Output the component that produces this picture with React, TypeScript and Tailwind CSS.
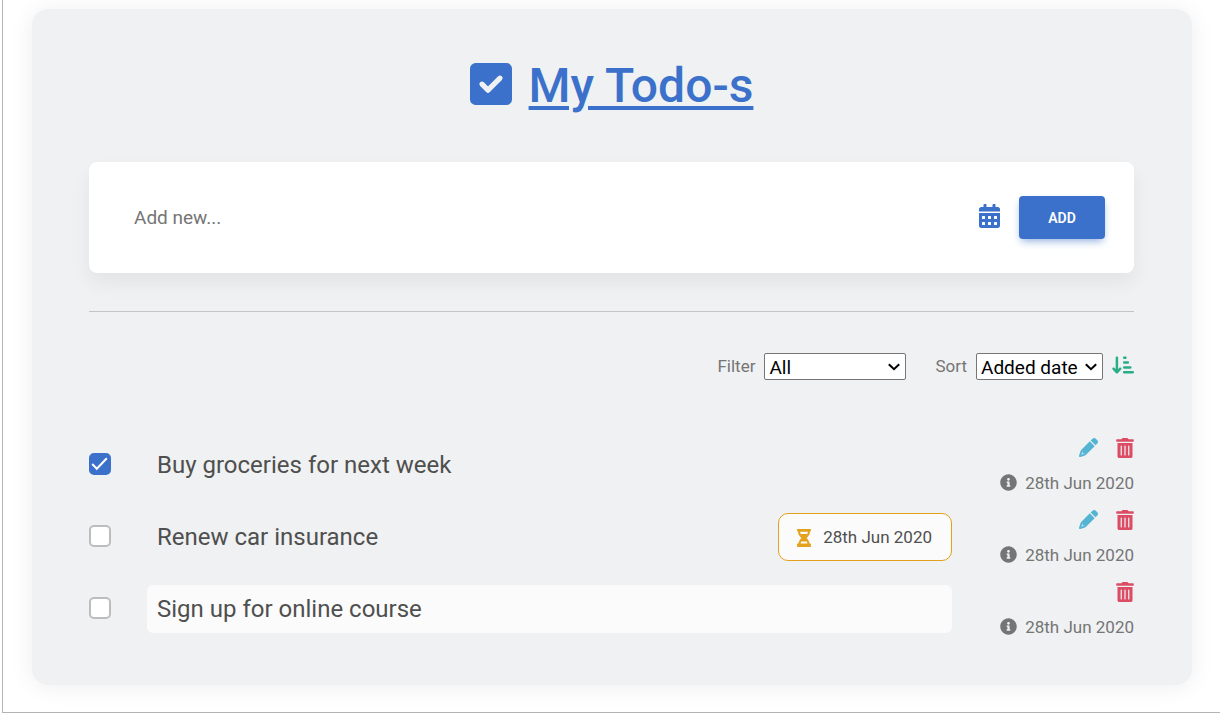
import { useState } from "react";
import { FaArrowDownShortWide } from "react-icons/fa6";
import { FaCalendarAlt, FaTrashAlt, FaInfoCircle } from "react-icons/fa";

type Todo = {
  id: number;
  title: string;
  done: boolean;
  due?: string;
  added: string;
  editing?: boolean;
};

const initialTodos: Todo[] = [
  { id: 1, title: "Buy groceries for next week", done: true, added: "28th Jun 2020" },
  { id: 2, title: "Renew car insurance", done: false, due: "28th Jun 2020", added: "28th Jun 2020" },
  { id: 3, title: "Sign up for online course", done: false, added: "28th Jun 2020", editing: true },
];

function SquareCheck() {
  return (
    <svg viewBox="0 0 448 448" className="mb-1 size-[42px]" aria-hidden="true">
      <rect width="448" height="448" rx="60" fill="currentColor" />
      <path
        d="M128 226 L192 290 L320 162"
        fill="none"
        stroke="#eff1f2"
        strokeWidth="56"
        strokeLinecap="round"
        strokeLinejoin="round"
      />
    </svg>
  );
}

function Pencil() {
  return (
    <svg viewBox="0 0 512 512" className="size-[19px]" fill="currentColor" aria-hidden="true">
      <path d="M421.7 220.3L188.5 453.4C178.1 463.8 165.2 471.5 151.1 475.6L30.8 511C22.4 513.5 13.2 511.2 7 505C.8 498.8-1.5 489.7 1 481.2L36.4 360.9C40.5 346.8 48.2 333.9 58.6 323.5L291.7 90.3L421.7 220.3zM492.7 58.8C517.7 83.7 517.7 124.3 492.7 149.3L444.3 197.7L314.3 67.7L362.7 19.3C387.7-5.7 428.3-5.7 453.3 19.3L492.7 58.8z" />
      <path d="M96 345 V400 Q96 416 112 416 H166 L138 430 L59 453 L82 374 Z" fill="#eff1f2" fillOpacity="0.7" />
    </svg>
  );
}

function Hourglass() {
  return (
    <svg viewBox="0 0 14 18" className="mr-3 h-[18px] w-[14px] text-[#e4a11b]" aria-hidden="true">
      <rect x="0" y="0" width="14" height="2.4" rx="1" fill="currentColor" />
      <path
        d="M2.2 1.5 V3.5 C2.2 6 4 7.4 5.8 9 C4 10.6 2.2 12 2.2 16.5 H11.8 C11.8 12 10 10.6 8.2 9 C10 7.4 11.8 6 11.8 3.5 V1.5 Z"
        fill="none"
        stroke="currentColor"
        strokeWidth="2"
      />
      <path d="M3.2 5 H10.8 L7.6 9 L10.2 10.8 L9.4 12.4 H4.6 L3.8 10.8 L6.4 9 Z" fill="currentColor" />
      <rect x="0" y="14.6" width="14" height="3.4" rx="1" fill="currentColor" />
    </svg>
  );
}

function Chevron() {
  return (
    <svg
      viewBox="0 0 12 8"
      className="pointer-events-none col-start-1 row-start-1 mr-[6px] h-2 w-3 justify-self-end"
      aria-hidden="true"
    >
      <path d="M0.8 1.2 L6 6.2 L11.2 1.2" fill="none" stroke="#000" strokeWidth="2" />
    </svg>
  );
}

function Checkbox({ checked, label, onChange }: { checked: boolean; label: string; onChange: () => void }) {
  return (
    <span className="mb-0.5 grid size-[22px] shrink-0">
      <input
        type="checkbox"
        aria-label={label}
        checked={checked}
        onChange={onChange}
        className="col-start-1 row-start-1 size-[22px] appearance-none rounded-[5px] border-2 border-[#bdbdbd] bg-white checked:border-[#3b71ca] checked:bg-[#3b71ca]"
      />
      {checked && (
        <svg viewBox="0 0 22 22" className="pointer-events-none col-start-1 row-start-1 size-[22px]" aria-hidden="true">
          <path d="M3.2 11 L7.8 15.7 L17.8 5.2" fill="none" stroke="#fff" strokeWidth="2" />
        </svg>
      )}
    </span>
  );
}

function TodoRow({ todo, onToggle }: { todo: Todo; onToggle: () => void }) {
  return (
    <li className="flex h-[72px] items-center">
      <Checkbox checked={todo.done} label={todo.title} onChange={onToggle} />
      <div className="ml-9 flex flex-1 items-center">
        {todo.editing ? (
          <input
            type="text"
            aria-label="Edit todo"
            defaultValue={todo.title}
            className="h-12 w-full rounded-md bg-[#fbfbfb] px-[10px] text-2xl text-[#4f4f4f] outline-none"
          />
        ) : (
          <p className="flex-1 px-[10px] text-2xl text-[#4f4f4f]">{todo.title}</p>
        )}
        {todo.due && (
          <div className="flex h-12 items-center rounded-[10px] border border-[#e4a11b] bg-[#fbfbfb] pr-[19px] pl-[18px] pt-px text-[17px] text-[#4f4f4f]">
            <Hourglass />
            {todo.due}
          </div>
        )}
      </div>
      <div className="flex w-[182px] flex-col items-end pt-px">
        <div className="flex h-9 items-center gap-[18px]">
          {!todo.editing && (
            <button type="button" aria-label="Edit todo" className="text-[#54b4d3]">
              <Pencil />
            </button>
          )}
          <button type="button" aria-label="Delete todo" className="text-[#dc4c64]">
            <FaTrashAlt className="h-5 w-[18px]" />
          </button>
        </div>
        <p className="flex h-9 items-center gap-2 text-[17px] text-[#757575]">
          <FaInfoCircle className="mb-0.5 size-[17px]" aria-hidden="true" />
          {todo.added}
        </p>
      </div>
    </li>
  );
}

export default function App() {
  const [todos, setTodos] = useState(initialTodos);
  const toggle = (id: number) => setTodos(todos.map((t) => (t.id === id ? { ...t, done: !t.done } : t)));

  return (
    <div className="bg-white pl-[2px] font-[Roboto,sans-serif]">
      <div className="border-b border-l border-[#b4b4b4] pt-[9px] pr-7 pb-[27px] pl-[29px]">
        <main className="rounded-2xl bg-[#eff1f2] pt-10 pr-[58px] pb-10 pl-[57px] shadow-[0_2px_25px_rgba(0,0,0,0.07)]">
          <h1 className="flex h-[73px] items-center justify-center gap-[17px] text-5xl font-medium text-[#3b71ca]">
            <SquareCheck />
            <span className="underline decoration-4 underline-offset-4">My Todo-s</span>
          </h1>

          <form
            onSubmit={(e) => e.preventDefault()}
            className="mt-10 flex h-[111px] items-center rounded-lg bg-white pr-[29px] pl-[45px] shadow-[0_10px_20px_rgba(0,0,0,0.06)]"
          >
            <input
              type="text"
              aria-label="New todo"
              placeholder="Add new..."
              className="h-12 min-w-0 flex-1 text-[19px] text-[#4f4f4f] outline-none placeholder:text-[#757575]"
            />
            <button type="button" aria-label="Set due date" className="mb-[3px] text-[#3b71ca]">
              <FaCalendarAlt className="h-6 w-[21px]" />
            </button>
            <button
              type="submit"
              className="ml-[19px] h-[43px] w-[86px] rounded bg-[#3b71ca] text-sm font-semibold text-white shadow-[0_4px_9px_-2px_#8fadde]"
            >
              ADD
            </button>
          </form>

          <hr className="mt-[38px] border-[#c3c5c7]" />

          <div className="mt-[41px] flex h-[27px] items-center justify-end text-[17px] text-[#757575]">
            <label htmlFor="filter">Filter</label>
            <span className="ml-[9px] grid h-[27px] w-[142px] items-center">
              <select
                id="filter"
                className="col-start-1 row-start-1 h-[27px] w-full appearance-none rounded-[2px] border border-[#767676] bg-white px-1 pb-0.5 text-[19px] text-black"
              >
                <option>All</option>
                <option>Completed</option>
                <option>Active</option>
                <option>Has due date</option>
              </select>
              <Chevron />
            </span>
            <label htmlFor="sort" className="ml-[29px]">
              Sort
            </label>
            <span className="ml-[9px] grid h-[27px] w-[127px] items-center">
              <select
                id="sort"
                className="col-start-1 row-start-1 h-[27px] w-full appearance-none rounded-[2px] border border-[#767676] bg-white px-1 pb-0.5 text-[19px] text-black"
              >
                <option>Added date</option>
                <option>Due date</option>
              </select>
              <Chevron />
            </span>
            <button type="button" aria-label="Ascending" className="mb-[3px] ml-[9px] text-[#29ad85]">
              <FaArrowDownShortWide className="size-[22px]" />
            </button>
          </div>

          <ul className="mt-[49px]">
            {todos.map((todo) => (
              <TodoRow key={todo.id} todo={todo} onToggle={() => toggle(todo.id)} />
            ))}
          </ul>
        </main>
      </div>
    </div>
  );
}
